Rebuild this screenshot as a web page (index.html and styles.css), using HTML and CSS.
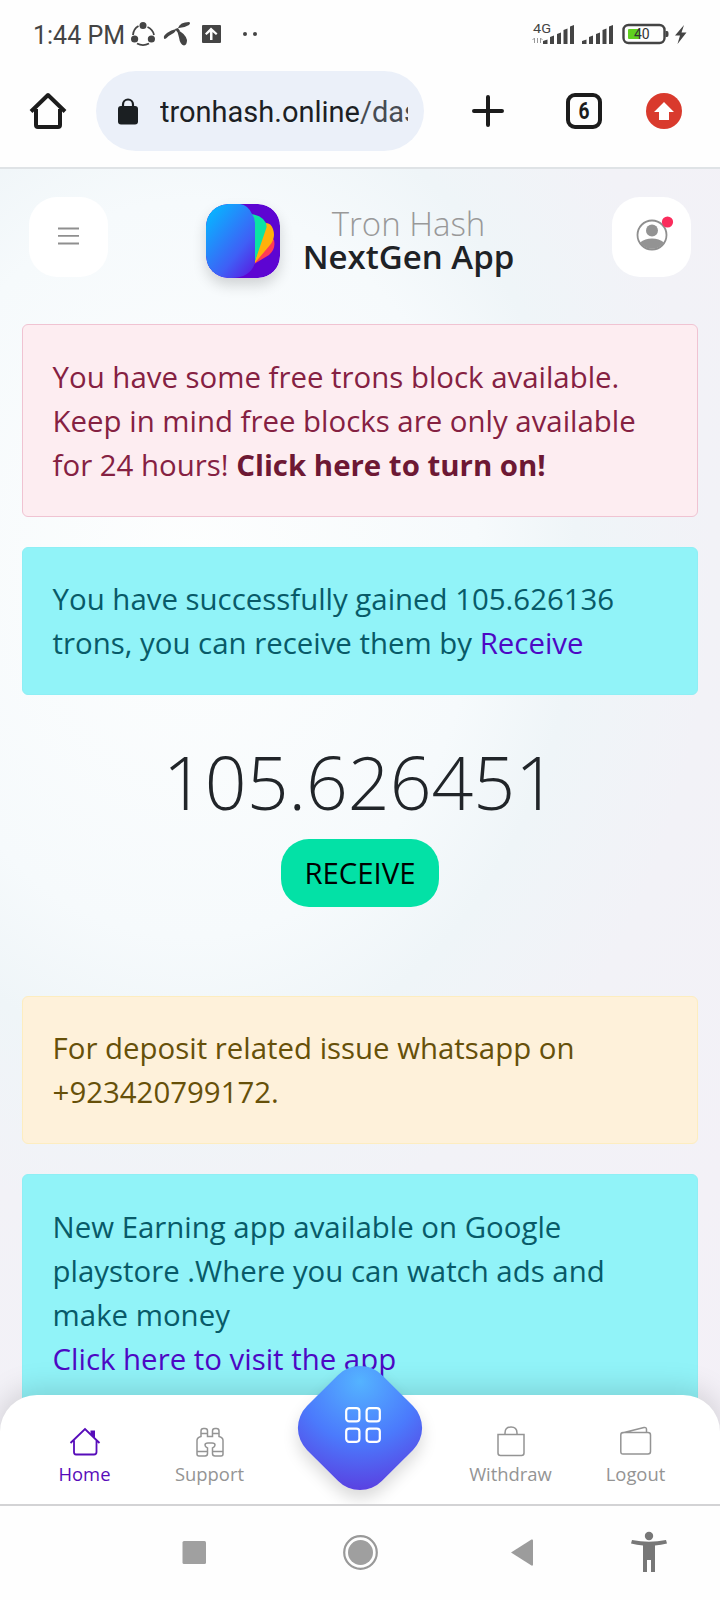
FILE: index.html
```html
<!DOCTYPE html>
<html lang="en">
<head>
<meta charset="utf-8">
<title>Tron Hash</title>
<link rel="stylesheet" href="styles.css">
</head>
<body>
<div class="screen">
  <div class="status">
    <span class="clock">1:44 PM</span>
    <svg class="status-icons" width="130" height="28" viewBox="131 20 130 28">
      <g fill="none" stroke="#444" stroke-width="1.8"><path d="M147.500 27a11 11 0 0 1 6.500 8M138.500 26a11 11 0 0 0-5.500 9M137 43.500a13 13 0 0 0 12 0"/></g>
      <g fill="#444"><circle cx="143" cy="25.500" r="3.500"/><circle cx="134.600" cy="39" r="3.600"/><circle cx="151.400" cy="39" r="3.600"/>
      <path d="M164 38q-1-2 3-5t9-4q0 3-4 5t-6 4.500q-2 1-2-.5zM178 28q2-6 11-6 2 1 0 3-5 3-10 3zM177 30q8 3 10 10 0 5-3 5.500-4-1-5-8zM175 29l3-1 2 3-2 2z"/>
      <path fill-rule="evenodd" d="M203 25h17q1 0 1 1v16q0 1-1 1h-17q-1 0-1-1V26q0-1 1-1zM211 27.500l-6 6 1.500 1.500 3.500-3v8h2.500v-8l3.500 3 1.500-1.500z"/>
      <circle cx="245" cy="34" r="2"/><circle cx="255" cy="34" r="2"/></g>
    </svg>
    <svg class="signals" width="156" height="28" viewBox="531 20 156 28">
      <text class="net" x="533" y="32.500" textLength="18" lengthAdjust="spacingAndGlyphs">4G</text>
      <path stroke="#999" fill="none" d="M534.500 43v-5m-2 2l2-2m3 0v5m3 0v-5l2 2"/>
      <g fill="#444"><path d="M543 44v-3l4.500-1.500V44zM550 44v-7l4-1.500V44zM557 44V34l4-1.500V44zM563.500 44V30l4-1.500V44zM570 44V26.500l4-1.500v19z"/><path transform="translate(39)" d="M543 44v-3l4.500-1.500V44zM550 44v-7l4-1.500V44zM557 44V34l4-1.500V44zM563.500 44V30l4-1.500V44zM570 44V26.500l4-1.500v19z"/>
      <path d="M665.500 31h1.500q1.500 0 1.500 2v2q0 2-1.500 2h-1.500zM684 25l-9 10.500h5l-2.500 8.500 9-11.500h-5z"/></g>
      <rect x="623.500" y="25" width="41" height="18" rx="5" fill="none" stroke="#444" stroke-width="2.400"/>
      <rect x="628" y="29" width="12" height="10" rx="1" fill="#5fd01f"/>
      <text class="pct" x="634" y="39">40</text>
    </svg>
  </div>
  <div class="toolbar">
    <svg class="home" width="38" height="38" viewBox="29 92 38 38"><path d="M31 111.500l17-16.500 17 16.500M36 109v16q0 2 2 2h20q2 0 2-2v-16" fill="none" stroke="#1c1c1c" stroke-width="4" stroke-linejoin="round"/></svg>
    <div class="omnibox">
      <svg width="20" height="27" viewBox="0 0 20 27"><rect y="8" width="20" height="18.500" rx="3" fill="#1b1f22"/><path d="M5 9V6.500a5 5 0 0 1 10 0V9" fill="none" stroke="#1b1f22" stroke-width="2.200"/></svg>
      <span class="url">tronhash.online<span class="path">/dash</span></span>
    </div>
    <svg class="tools" width="212" height="38" viewBox="471 92 212 38">
      <path d="M488 97v28M474 111h28" stroke="#1c1c1c" stroke-width="4" stroke-linecap="round" fill="none"/>
      <rect x="568" y="95" width="32" height="32" rx="7" fill="none" stroke="#1c1c1c" stroke-width="4"/>
      <text class="tabs" x="578.500" y="119" textLength="11" lengthAdjust="spacingAndGlyphs">6</text>
      <circle cx="664" cy="111" r="18" fill="#d93a2d"/><path d="M664 102l10 10h-5v8h-10v-8h-5z" fill="#fff"/>
    </svg>
  </div>
  <main class="page">
    <header class="header">
      <div class="tile"><svg width="22" height="18" viewBox="0 0 22 18"><path d="M0 1.500h21M0 8.800h21M0 16.500h21" stroke="#8f8f8f" stroke-width="1.800"/></svg></div>
      <div class="brand">
        <svg class="logo" width="74" height="74" viewBox="0 0 74 74">
          <defs>
            <linearGradient id="blue" gradientUnits="userSpaceOnUse" x1="0" y1="12" x2="62" y2="62"><stop offset="0" stop-color="#08b4ff"/><stop offset=".6" stop-color="#3f5ff6"/><stop offset="1" stop-color="#5f0edc"/></linearGradient>
            <clipPath id="tile"><rect width="74" height="74" rx="22"/></clipPath>
          </defs>
          <g clip-path="url(#tile)"><rect width="74" height="74" fill="#5d05d2"/>
          <path d="M48 60l15-9q7-6 5-15l-6-5z" fill="#ff3c55"/><path d="M48 60l16-19q6-7 3-16-2-6-7-6z" fill="#ffb10a"/><path d="M48 60l12-35q2-5-3-10-4-4-12-5z" fill="#0be3a4"/>
          <path d="M0 0h34q8 1 12 10 3 4 3 9v40q-5 15-24 15H0z" fill="url(#blue)"/></g>
        </svg>
        <div class="title"><span class="thin">Tron Hash</span><strong>NextGen App</strong></div>
      </div>
      <div class="tile"><svg class="user" width="40" height="38" viewBox="0 0 40 38"><circle cx="17" cy="20" r="14.500" fill="none" stroke="#8f8f8f" stroke-width="1.800"/><circle cx="17" cy="15.500" r="6" fill="#939393"/><path d="M5 27.500q5-4 12-4t12 4a14.500 14.500 0 0 1-24 0z" fill="#939393"/><circle cx="32.500" cy="7" r="5.600" fill="#fa2c5c"/></svg></div>
    </header>
    <div class="alert danger">You have some free trons block available. Keep in mind free blocks are only available for 24 hours! <b>Click here to turn on!</b></div>
    <div class="alert info">You have successfully gained 105.626136 trons, you can receive them by <a>Receive</a></div>
    <section class="balance"><div class="amount">105.626451</div><button class="receive">RECEIVE</button></section>
    <div class="alert warning">For deposit related issue whatsapp on +923420799172.</div>
    <div class="alert info">New Earning app available on Google playstore .Where you can watch ads and make money<br><a>Click here to visit the app</a></div>
  </main>
  <nav class="tabbar">
    <div class="tab active"><svg width="32" height="32" viewBox="0 0 32 32"><path d="M1.500 17L16 3l14.500 14M5 14.500V26q0 2.500 2 2.500h18q2.500 0 2.500-2.500V14.500" fill="none" stroke="currentColor" stroke-width="1.800"/><path d="M21.500 8V4.500h4.500V12z" fill="currentColor"/></svg><span>Home</span></div>
    <div class="tab"><svg width="32" height="32" viewBox="0 0 32 32"><path d="M7 8.500V5q0-2.500 2.500-2.500H11q2.500 0 2.500 2.500v5.500h5V5q0-2.500 2.500-2.500h1.500Q25 2.500 25 5v3.500M7 7.500h6.500M18.500 7.500H25M7 7.500v3q-4 1-4 4V28q0 2 2 2h6q2.500 0 2.500-2.500V22q-2.500-1-2.500-3t3-2h4q3 0 3 2t-2.500 3v5.500q0 2.500 2.500 2.500h6q2 0 2-2V14.500q0-3-4-4v-3M3 25.500h10.500M18.500 25.500H29" fill="none" stroke="currentColor" stroke-width="1.500"/></svg><span>Support</span></div>
    <div class="fab-slot"><div class="fab"></div><svg class="grid" width="36" height="36" viewBox="0 0 36 36"><g fill="none" stroke="#fff" stroke-width="2.200"><rect x="1.200" y="1.200" width="13.200" height="13.200" rx="3"/><rect x="21.600" y="1.200" width="13.200" height="13.200" rx="3"/><rect x="1.200" y="21.600" width="13.200" height="13.200" rx="3"/><rect x="21.600" y="21.600" width="13.200" height="13.200" rx="3"/></g></svg></div>
    <div class="tab"><svg width="32" height="32" viewBox="0 0 32 32"><path d="M3 8.500h26V27q0 2.500-2.500 2.500h-21Q3 29.500 3 27zM10 8.500V7q0-6 6-6t6 6v1.500" fill="none" stroke="currentColor" stroke-width="1.500"/></svg><span>Withdraw</span></div>
    <div class="tab"><svg width="32" height="32" viewBox="0 0 32 32"><path d="M3 6.500h25q2.500 0 2.500 2.500v16.500q0 2.500-2.500 2.500H3Q.8 28 .8 25.500V9q0-2.500 2.200-2.500zM2 7L24 1.500q2.500-.5 2.500 2v3" fill="none" stroke="currentColor" stroke-width="1.500"/></svg><span>Logout</span></div>
  </nav>
  <div class="sysnav">
    <svg width="510" height="44" viewBox="180 1530 510 44">
      <rect x="182.500" y="1541" width="23.500" height="23" rx="1.500" fill="#a0a0a0"/>
      <circle cx="360.500" cy="1552.500" r="16.300" fill="none" stroke="#999" stroke-width="2.200"/><circle cx="360.500" cy="1552.500" r="12.500" fill="#9f9f9f"/>
      <path d="M511 1552.500l20.500-13q1.500-.5 1.500 1v24q0 1.500-1.500 1z" fill="#9c9c9c"/>
      <g fill="#777"><circle cx="649" cy="1536" r="4.200"/><path d="M632 1540q17 3.500 34 0l1 3.500q-6 1.500-12 2V1572h-4v-12h-4v12h-4v-26.500q-6-.5-12-2z"/></g>
    </svg>
  </div>
</div>
</body>
</html>
```
FILE: styles.css
```css
* { box-sizing: border-box; }
body { margin: 0; background: #fff; font-family: "Open Sans", sans-serif; color: #212529; }
svg { display: block; flex: none; }
.screen { width: 720px; height: 1600px; display: flex; flex-direction: column; overflow: hidden; background: #fefefe; }

.status { height: 71px; flex: none; display: flex; align-items: flex-start; padding: 20px 33px 0 33px; font-family: Roboto, sans-serif; }
.clock { width: 98px; font-size: 25px; line-height: 31px; color: #444; white-space: nowrap; }
.signals { margin-left: auto; }
.net { font: 13px Roboto, sans-serif; fill: #444; }
.pct { font: 14px Roboto, sans-serif; fill: #333; }

.toolbar { height: 98px; flex: none; display: flex; align-items: flex-start; padding: 0 37px 0 29px; border-bottom: 2px solid #dfe3e6; }
.toolbar > svg { margin-top: 21px; }
.omnibox { width: 328px; height: 80px; margin-left: 29px; padding: 0 16px 0 22px; border-radius: 40px; background: #ebf0f9; display: flex; align-items: center; gap: 22px; }
.url { flex: 1; overflow: hidden; white-space: nowrap; font: 29px/40px Roboto, sans-serif; color: #1c1f24; padding-top: 2px; }
.path { color: #474c53; }
.tools { margin-left: auto; }
.tabs { font: 700 23px Roboto, sans-serif; fill: #1c1c1c; }

.page { flex: 1; min-height: 0; overflow: hidden; padding: 28px 22px 0; background: radial-gradient(ellipse 900px 1150px at 190px 400px, #fdfefe 0, #f6fafc 32%, #eff5f8 43%, #f2f2f7 58%, #f4f0f7 100%); }
.header { display: flex; justify-content: space-between; padding: 0 7px; height: 127px; }
.tile { width: 79px; height: 80px; border-radius: 28px; background: #fff; display: flex; align-items: center; justify-content: center; }
.tile svg { margin-top: -3px; }
.tile .user { margin: -6px 0 0 6px; }
.brand { display: flex; gap: 23px; padding-top: 7px; }
.logo { border-radius: 22px; box-shadow: 0 7px 14px rgba(0,0,0,.16); }
.title { display: flex; flex-direction: column; align-items: center; padding-top: 2px; }
.title span { font-size: 33px; font-weight: 300; line-height: 35px; color: #999; }
.title strong { font-size: 33px; font-weight: 600; line-height: 31px; color: #1e2226; }

.alert { padding: 29.6px 29px 29px 29.6px; margin-bottom: 30px; border: 1px solid; border-radius: 6px; font-size: 29.4px; line-height: 44px; }
.danger { color: #852142; background: #fdedf1; border-color: #f0c3d2; }
.danger b { color: #6d1834; }
.info { color: #085a68; background: #91f3f8; border-color: #8eeff5; }
.info a { color: #4d08c4; }
.warning { color: #665009; background: #fef1da; border-color: #fdedc0; }

.balance { height: 270.5px; display: flex; flex-direction: column; align-items: center; }
.amount { font-size: 73.3px; font-weight: 300; line-height: 88px; margin-top: 13px; }
.receive { width: 158px; height: 68px; margin-top: 12.500px; padding: 0; border: 0; border-radius: 28px; background: #03e1a6; color: #000; font: 29.3px "Open Sans", sans-serif; }

.tabbar { position: relative; z-index: 1; height: 110px; margin-top: -110px; flex: none; display: grid; grid-template-columns: 125px 125px 176px 125px 125px; padding-left: 22px; border-radius: 37px 37px 0 0; background: #fff; box-shadow: 0 -5px 30px rgba(0,0,0,.15); clip-path: inset(-60px 0 0 0); }
.tab { display: flex; flex-direction: column; align-items: center; padding-top: 31px; color: #949494; font-size: 18.4px; line-height: 25px; }
.tab span { margin-top: 3px; }
.active { color: #570cba; }
.fab-slot { position: relative; }
.fab { position: absolute; left: 35px; top: -20px; width: 106px; height: 106px; border-radius: 31px; transform: rotate(45deg); background: radial-gradient(circle at 20px 20px, #54b3ff 0, #4b7afc 60px, #5c37dc 118px); box-shadow: 6px 6px 16px rgba(0,0,0,.15); }
.grid { position: absolute; left: 73px; top: 12px; }
.sysnav { position: relative; z-index: 2; height: 96px; flex: none; margin-top: -1px; padding: 24px 30px 0 180px; border-top: 2px solid #d3d3d5; background: #fefefe; }
```
